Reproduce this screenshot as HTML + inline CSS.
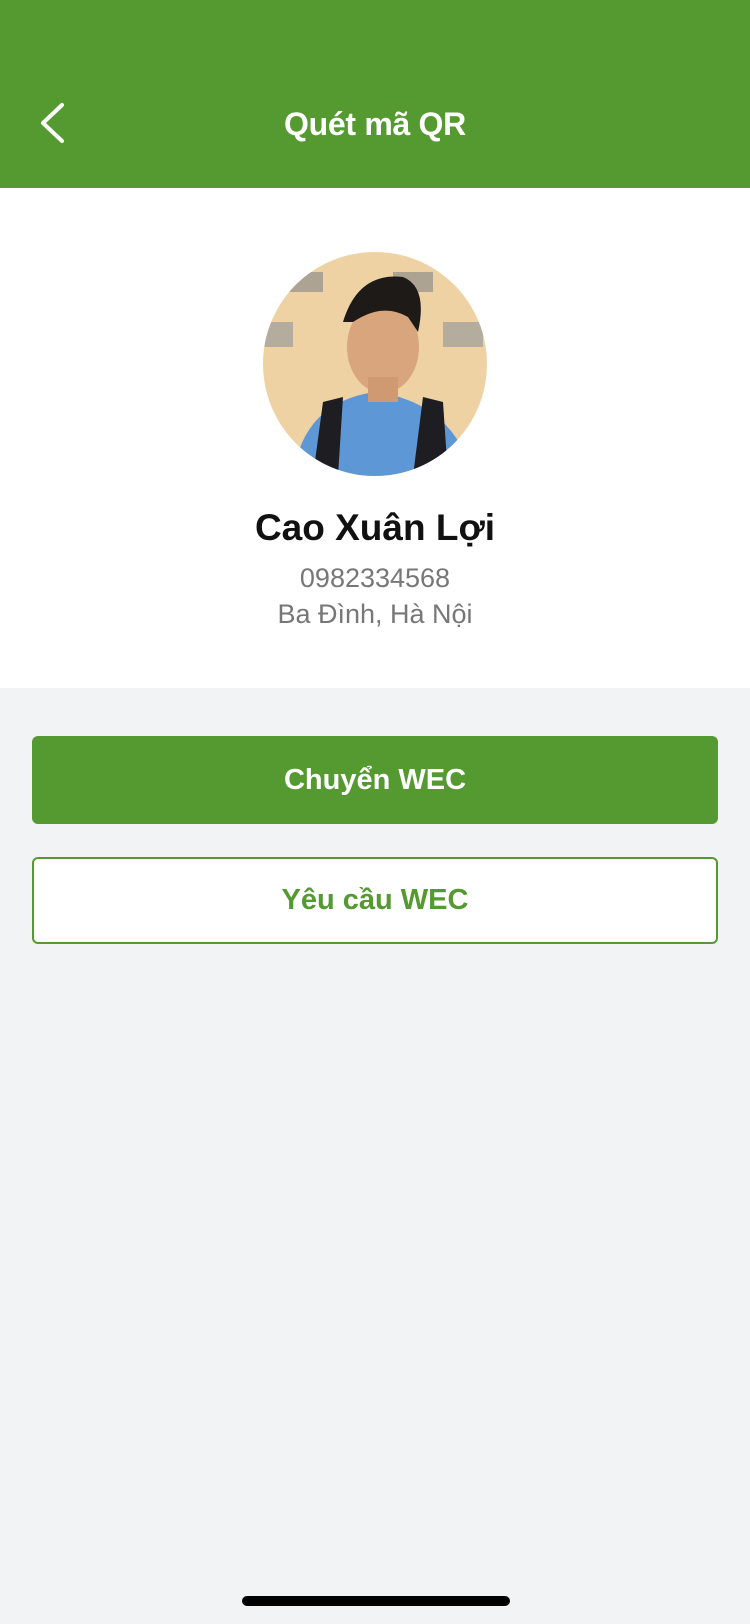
<!DOCTYPE html>
<html><head><meta charset="utf-8">
<style>
*{margin:0;padding:0;box-sizing:border-box}
body{width:750px;height:1624px;background:#f2f3f5;font-family:"Liberation Sans",Roboto,sans-serif;position:relative;overflow:hidden}
.hdr{position:absolute;left:0;top:0;width:750px;height:188px;background:#559a31}
.hdr .t{position:absolute;left:0;right:0;top:104px;text-align:center;color:#fff;font-size:32px;font-weight:bold;line-height:40px;letter-spacing:-0.3px}
.white{position:absolute;left:0;top:188px;width:750px;height:500px;background:#fff}
.av{position:absolute;left:263px;top:252px;width:224px;height:224px;border-radius:50%;overflow:hidden}
.name{position:absolute;left:0;right:0;top:506px;text-align:center;font-size:37px;font-weight:bold;color:#111;line-height:44px}
.sub{position:absolute;left:0;right:0;text-align:center;font-size:27px;color:#777;line-height:32px}
.b1{position:absolute;left:32px;top:736px;width:686px;height:88px;background:#559a31;border-radius:6px;color:#fff;font-size:29px;font-weight:bold;text-align:center;line-height:88px}
.b2{position:absolute;left:32px;top:857px;width:686px;height:87px;background:#fff;border:2px solid #559a31;border-radius:6px;color:#559a31;font-size:29px;font-weight:bold;text-align:center;line-height:83px}
.home{position:absolute;left:242px;top:1596px;width:268px;height:10px;border-radius:5px;background:#000}
</style></head><body>
<div class="hdr">
<svg style="position:absolute;left:38px;top:102px" width="30" height="42" viewBox="0 0 30 42"><path d="M24 3 L5 21 L24 39" fill="none" stroke="#fff" stroke-width="4" stroke-linecap="round" stroke-linejoin="round"/></svg>
<div class="t">Quét mã QR</div>
</div>
<div class="white"></div>
<div class="av">
<svg width="224" height="224" viewBox="0 0 224 224">
<rect x="0" y="0" width="224" height="224" fill="#eed2a4"/>
<rect x="20" y="20" width="40" height="20" fill="#6b7480" opacity=".5"/>
<rect x="130" y="20" width="40" height="20" fill="#6b7480" opacity=".5"/>
<rect x="180" y="70" width="40" height="25" fill="#7a8594" opacity=".5"/>
<rect x="0" y="70" width="30" height="25" fill="#7a8594" opacity=".5"/>
<path d="M30 224 Q40 150 112 140 Q190 150 210 224 Z" fill="#5e97d6"/>
<path d="M50 224 L60 150 L80 145 L75 224 Z" fill="#1d1d22"/>
<path d="M150 224 L160 145 L180 150 L185 224 Z" fill="#1d1d22"/>
<ellipse cx="120" cy="95" rx="36" ry="46" fill="#d9a57c"/>
<path d="M80 70 Q95 20 140 25 Q165 35 155 80 L145 65 Q120 50 90 70 Z" fill="#1e1a18"/>
<rect x="105" y="125" width="30" height="25" fill="#cf9a72"/>
</svg>
</div>
<div class="name">Cao Xuân Lợi</div>
<div class="sub" style="top:562px">0982334568</div>
<div class="sub" style="top:598px">Ba Đình, Hà Nội</div>
<div class="b1">Chuyển WEC</div>
<div class="b2">Yêu cầu WEC</div>
<div class="home"></div>
</body></html>
